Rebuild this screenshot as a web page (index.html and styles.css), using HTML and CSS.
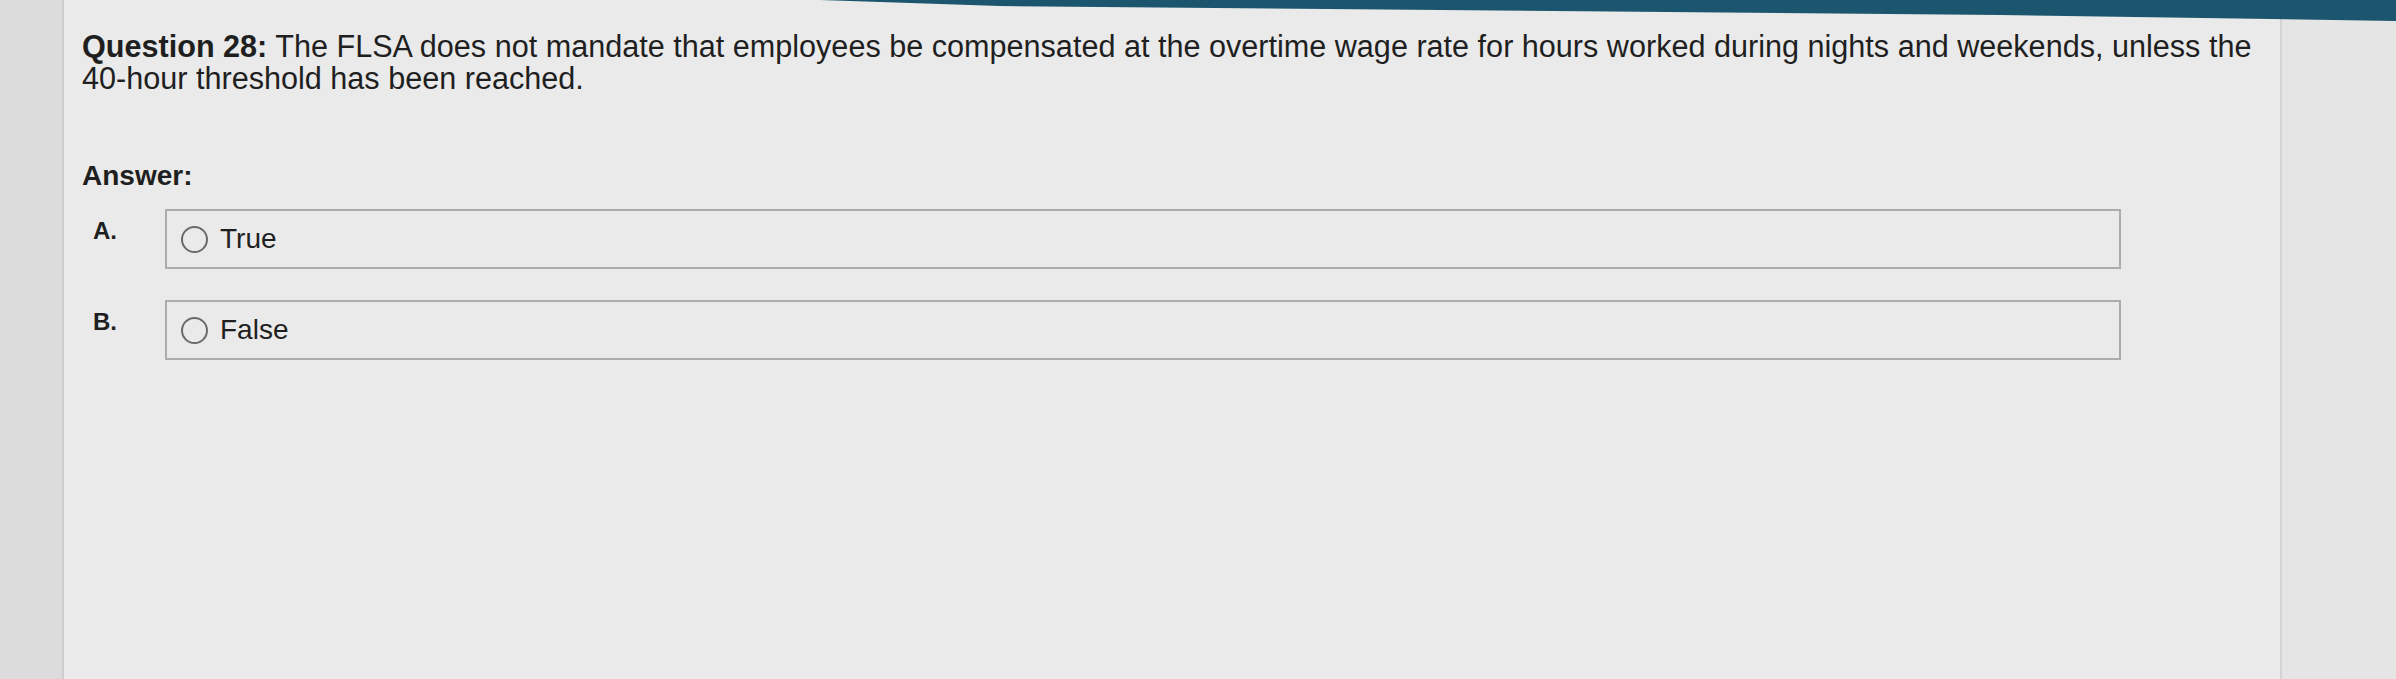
FILE: index.html
```html
<!DOCTYPE html>
<html lang="en">
<head>
  <meta charset="UTF-8">
  <meta name="viewport" content="width=device-width, initial-scale=1.0">
  <title>Question 28</title>
  <link rel="stylesheet" href="styles.css">
</head>
<body>
  <div class="topbar"></div>

  <div class="layout">
    <div class="gutter"></div>

    <div class="panel">
      <p class="question"><strong>Question 28:</strong> The FLSA does not mandate that employees be compensated at the overtime wage rate for hours worked during nights and weekends, unless the 40-hour threshold has been reached.</p>

      <div class="answer-title">Answer:</div>

      <div class="choices">
        <div class="choice">
          <span class="letter">A.</span>
          <label class="option"><span class="radio"></span>True</label>
        </div>
        <div class="choice">
          <span class="letter">B.</span>
          <label class="option"><span class="radio"></span>False</label>
        </div>
      </div>
    </div>

    <div class="side"></div>
  </div>
</body>
</html>
```

FILE: styles.css
```css
/* page */
body {
  margin: 0;
  font-family: "Liberation Sans", Arial, sans-serif;
  color: #1f1f1f;
  background-color: #dedede;
}

/* header strip across the top */
.topbar {
  position: absolute;
  top: 0;
  left: 0;
  right: 0;
  height: 22px;
  background-color: #1b566e;
  clip-path: polygon(820px 0, 100% 0, 100% 21px, 2000px 15px, 1000px 6px);
}

.layout {
  display: grid;
  grid-template-columns: 64px 2216px 1fr;
  height: 100vh;
}
.gutter {
  background-color: #dcdcdc;
  border-right: 2px solid #cdcdcd;
}
.side {
  background-color: #e5e5e5;
  border-left: 2px solid #d4d4d4;
}

/* question panel */
.panel {
  background-color: #eaeaea;
  padding-left: 18px;
}
.question {
  margin: 0;
  padding-top: 30px;
  font-size: 30.6px;
  line-height: 32px;
}
.answer-title {
  margin-top: 68px;
  font-size: 28px;
  line-height: 28px;
  font-weight: bold;
}

/* answer choices */
.choices {
  margin-top: 19px;
  display: flex;
  flex-direction: column;
  gap: 31px;
}
.choice {
  display: grid;
  grid-template-columns: 83px 1956px;
}
.letter {
  padding: 8px 0 0 11px;
  font-size: 24px;
  line-height: 28px;
  font-weight: bold;
}
.option {
  box-sizing: border-box;
  height: 60px;
  display: flex;
  align-items: center;
  gap: 12px;
  padding-left: 14px;
  border: 2px solid #acacac;
  font-size: 28px;
}
.radio {
  box-sizing: border-box;
  width: 27px;
  height: 27px;
  border: 2px solid #6a6a6a;
  border-radius: 50%;
}
```
